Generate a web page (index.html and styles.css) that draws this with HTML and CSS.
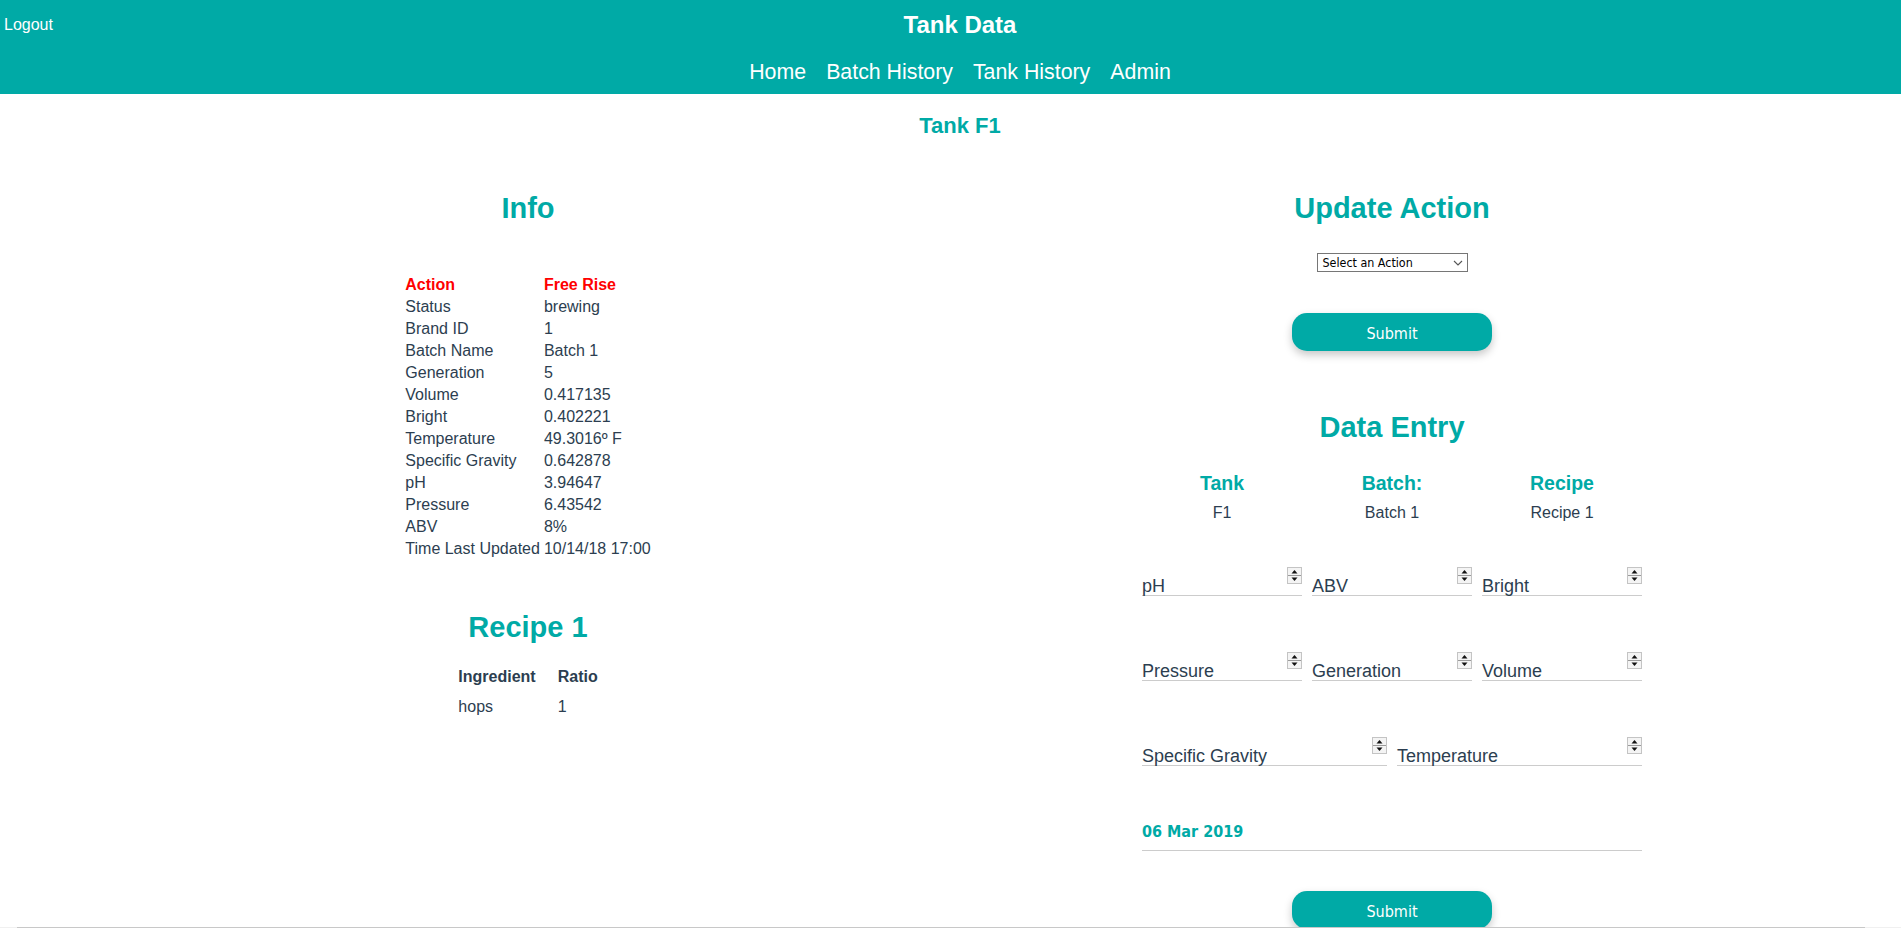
FILE: index.html
```html
<!DOCTYPE html>
<html lang="en">
<head>
<meta charset="utf-8">
<title>Tank Data</title>
<link rel="stylesheet" href="styles.css">
</head>
<body>
<div class="page">
  <header class="header">
    <div class="topbar">
      <a class="logout">Logout</a>
      <div class="title">Tank Data</div>
      <div></div>
    </div>
    <nav class="nav">
      <a>Home</a>
      <a>Batch History</a>
      <a>Tank History</a>
      <a>Admin</a>
    </nav>
  </header>

  <h1 class="tank-title">Tank F1</h1>

  <div class="columns">
    <section class="col">
      <h2 class="section-title">Info</h2>
      <div class="info-wrap">
        <table class="info">
          <tr class="alert"><td>Action</td><td>Free Rise</td></tr>
          <tr><td>Status</td><td>brewing</td></tr>
          <tr><td>Brand ID</td><td>1</td></tr>
          <tr><td>Batch Name</td><td>Batch 1</td></tr>
          <tr><td>Generation</td><td>5</td></tr>
          <tr><td>Volume</td><td>0.417135</td></tr>
          <tr><td>Bright</td><td>0.402221</td></tr>
          <tr><td>Temperature</td><td>49.3016º F</td></tr>
          <tr><td>Specific Gravity</td><td>0.642878</td></tr>
          <tr><td>pH</td><td>3.94647</td></tr>
          <tr><td>Pressure</td><td>6.43542</td></tr>
          <tr><td>ABV</td><td>8%</td></tr>
          <tr><td>Time Last Updated</td><td>10/14/18 17:00</td></tr>
        </table>
      </div>
      <h2 class="section-title recipe-title">Recipe 1</h2>
      <table class="recipe">
        <tr><th>Ingredient</th><th>Ratio</th></tr>
        <tr><td>hops</td><td>1</td></tr>
      </table>
    </section>

    <section class="col col-right">
      <h2 class="section-title">Update Action</h2>
      <div class="select">
        <span>Select an Action</span>
        <svg class="chev" width="10" height="6" viewBox="0 0 10 6"><path d="M1 1 L5 5 L9 1" fill="none" stroke="#555" stroke-width="1.1"/></svg>
      </div>
      <button class="btn btn-first">Submit</button>

      <h2 class="section-title entry-title">Data Entry</h2>
      <div class="meta">
        <div class="meta-col"><div class="meta-head">Tank</div><div class="meta-val">F1</div></div>
        <div class="meta-col"><div class="meta-head">Batch:</div><div class="meta-val">Batch 1</div></div>
        <div class="meta-col"><div class="meta-head">Recipe</div><div class="meta-val">Recipe 1</div></div>
      </div>

      <div class="fields">
        <div class="row row3">
          <div class="field"><span class="label">pH</span><svg class="spin" width="15" height="17" viewBox="0 0 15 17"><rect x="0.5" y="0.5" width="14" height="16" fill="#f4f4f4" stroke="#c4c4c4"/><line x1="1" y1="8.5" x2="14" y2="8.5" stroke="#9a9a9a"/><path d="M4.5 6.5 L7.5 3 L10.5 6.5 Z" fill="#111"/><path d="M4.5 10.5 L10.5 10.5 L7.5 14 Z" fill="#111"/></svg></div>
          <div class="field"><span class="label">ABV</span><svg class="spin" width="15" height="17" viewBox="0 0 15 17"><rect x="0.5" y="0.5" width="14" height="16" fill="#f4f4f4" stroke="#c4c4c4"/><line x1="1" y1="8.5" x2="14" y2="8.5" stroke="#9a9a9a"/><path d="M4.5 6.5 L7.5 3 L10.5 6.5 Z" fill="#111"/><path d="M4.5 10.5 L10.5 10.5 L7.5 14 Z" fill="#111"/></svg></div>
          <div class="field"><span class="label">Bright</span><svg class="spin" width="15" height="17" viewBox="0 0 15 17"><rect x="0.5" y="0.5" width="14" height="16" fill="#f4f4f4" stroke="#c4c4c4"/><line x1="1" y1="8.5" x2="14" y2="8.5" stroke="#9a9a9a"/><path d="M4.5 6.5 L7.5 3 L10.5 6.5 Z" fill="#111"/><path d="M4.5 10.5 L10.5 10.5 L7.5 14 Z" fill="#111"/></svg></div>
        </div>
        <div class="row row3">
          <div class="field"><span class="label">Pressure</span><svg class="spin" width="15" height="17" viewBox="0 0 15 17"><rect x="0.5" y="0.5" width="14" height="16" fill="#f4f4f4" stroke="#c4c4c4"/><line x1="1" y1="8.5" x2="14" y2="8.5" stroke="#9a9a9a"/><path d="M4.5 6.5 L7.5 3 L10.5 6.5 Z" fill="#111"/><path d="M4.5 10.5 L10.5 10.5 L7.5 14 Z" fill="#111"/></svg></div>
          <div class="field"><span class="label">Generation</span><svg class="spin" width="15" height="17" viewBox="0 0 15 17"><rect x="0.5" y="0.5" width="14" height="16" fill="#f4f4f4" stroke="#c4c4c4"/><line x1="1" y1="8.5" x2="14" y2="8.5" stroke="#9a9a9a"/><path d="M4.5 6.5 L7.5 3 L10.5 6.5 Z" fill="#111"/><path d="M4.5 10.5 L10.5 10.5 L7.5 14 Z" fill="#111"/></svg></div>
          <div class="field"><span class="label">Volume</span><svg class="spin" width="15" height="17" viewBox="0 0 15 17"><rect x="0.5" y="0.5" width="14" height="16" fill="#f4f4f4" stroke="#c4c4c4"/><line x1="1" y1="8.5" x2="14" y2="8.5" stroke="#9a9a9a"/><path d="M4.5 6.5 L7.5 3 L10.5 6.5 Z" fill="#111"/><path d="M4.5 10.5 L10.5 10.5 L7.5 14 Z" fill="#111"/></svg></div>
        </div>
        <div class="row row2">
          <div class="field"><span class="label">Specific Gravity</span><svg class="spin" width="15" height="17" viewBox="0 0 15 17"><rect x="0.5" y="0.5" width="14" height="16" fill="#f4f4f4" stroke="#c4c4c4"/><line x1="1" y1="8.5" x2="14" y2="8.5" stroke="#9a9a9a"/><path d="M4.5 6.5 L7.5 3 L10.5 6.5 Z" fill="#111"/><path d="M4.5 10.5 L10.5 10.5 L7.5 14 Z" fill="#111"/></svg></div>
          <div class="field"><span class="label">Temperature</span><svg class="spin" width="15" height="17" viewBox="0 0 15 17"><rect x="0.5" y="0.5" width="14" height="16" fill="#f4f4f4" stroke="#c4c4c4"/><line x1="1" y1="8.5" x2="14" y2="8.5" stroke="#9a9a9a"/><path d="M4.5 6.5 L7.5 3 L10.5 6.5 Z" fill="#111"/><path d="M4.5 10.5 L10.5 10.5 L7.5 14 Z" fill="#111"/></svg></div>
        </div>
        <div class="row row1">
          <div class="field date-field"><span class="date">06 Mar 2019</span></div>
        </div>
      </div>

      <button class="btn btn-second">Submit</button>
    </section>
  </div>
</div>
<div class="hscroll"><div class="hscroll-thumb"></div></div>
</body>
</html>
```

FILE: styles.css
```css
html {
  overflow: hidden;
}
body {
  margin: 0;
  background: #ffffff;
  font-family: "Liberation Sans", Arial, sans-serif;
  color: #2c3e50;
  font-size: 16px;
}
.page {
  width: 1920px;
}

/* header */
.header {
  background: #00aaa6;
  color: #ffffff;
  padding: 11px 0 10px;
}
.topbar {
  display: grid;
  grid-template-columns: 1fr auto 1fr;
  align-items: start;
}
.logout {
  justify-self: start;
  margin-top: 5px;
  padding-left: 4px;
  font-size: 16px;
  line-height: 18px;
  color: #ffffff;
}
.title {
  font-size: 24px;
  line-height: 28px;
  font-weight: bold;
}
.nav {
  margin-top: 21px;
  display: flex;
  justify-content: center;
  gap: 20px;
  font-size: 21.33px;
  line-height: 24px;
}
.nav a {
  color: #ffffff;
}

.tank-title {
  margin: 20px 0 0;
  text-align: center;
  font-size: 22px;
  line-height: 24px;
  font-weight: bold;
  color: #00aaa6;
}

/* columns */
.columns {
  width: 1728px;
  margin: 0 auto;
  display: flex;
}
.col {
  width: 50%;
  display: flex;
  flex-direction: column;
  align-items: center;
}
.section-title {
  margin: 53px 0 0;
  font-size: 29px;
  line-height: 34px;
  font-weight: bold;
  color: #00aaa6;
  text-align: center;
}

.info-wrap {
  margin-top: 48px;
  display: flex;
  justify-content: center;
}
.info {
  border-spacing: 2px;
  font-size: 16px;
  line-height: 18px;
}
.info td {
  padding: 1px;
  text-align: left;
  white-space: nowrap;
}
.info .alert td {
  color: #ff0000;
  font-weight: bold;
}

.recipe-title {
  margin-top: 49px;
}
.recipe {
  margin-top: 17px;
  border-spacing: 2px;
  font-size: 16px;
  line-height: 18px;
}
.recipe th,
.recipe td {
  padding: 5px 10px;
  text-align: left;
}
.recipe th {
  font-weight: bold;
}

/* right column */
.select {
  margin-top: 28px;
  width: 151px;
  height: 19px;
  box-sizing: border-box;
  border: 1px solid #767676;
  background: #ffffff;
  display: flex;
  align-items: center;
  justify-content: space-between;
  padding: 0 4px 0 5px;
  font-family: "DejaVu Sans Condensed", "DejaVu Sans", sans-serif;
  font-size: 12.4px;
  color: #000000;
}
.chev {
  display: block;
}
.btn {
  width: 200px;
  height: 38px;
  border: none;
  border-radius: 15px;
  background: #00aaa6;
  color: #ffffff;
  font-family: "DejaVu Sans Condensed", "DejaVu Sans", sans-serif;
  font-size: 16px;
  padding: 2px 0 0;
  box-shadow: 0 4px 8px rgba(0, 0, 0, 0.22);
}
.btn-first {
  margin-top: 41px;
}
.entry-title {
  margin-top: 59px;
}
.meta {
  margin-top: 28px;
  display: grid;
  grid-template-columns: repeat(3, 170px);
  text-align: center;
}
.meta-head {
  font-size: 19.5px;
  line-height: 22px;
  font-weight: bold;
  color: #00aaa6;
}
.meta-val {
  margin-top: 10px;
  font-size: 16px;
  line-height: 18px;
}

.fields {
  margin-top: 45px;
  width: 500px;
  display: flex;
  flex-direction: column;
  gap: 56px;
}
.row {
  display: grid;
  gap: 10px;
}
.row3 {
  grid-template-columns: repeat(3, 1fr);
}
.row2 {
  grid-template-columns: repeat(2, 1fr);
}
.row1 {
  grid-template-columns: 1fr;
}
.field {
  height: 28px;
  border-bottom: 1px solid #cccccc;
  display: flex;
  justify-content: space-between;
  align-items: flex-end;
}
.label {
  font-size: 18px;
  line-height: 18px;
  color: #2c3e50;
  white-space: nowrap;
}
.spin {
  align-self: flex-start;
  display: block;
}
.date-field {
  align-items: flex-start;
}
.date {
  margin-top: 1px;
  font-family: "DejaVu Sans Condensed", "DejaVu Sans", sans-serif;
  font-weight: bold;
  font-size: 16px;
  line-height: 18px;
  color: #00aaa6;
}
.btn-second {
  margin-top: 40px;
}

/* horizontal scrollbar edge seen at the bottom of the window */
.hscroll {
  position: fixed;
  left: 0;
  right: 0;
  bottom: 0;
  height: 1px;
  background: #f0f0f0;
}
.hscroll-thumb {
  margin-left: 17px;
  width: 1848px;
  height: 1px;
  background: #c8c8c8;
}
```
